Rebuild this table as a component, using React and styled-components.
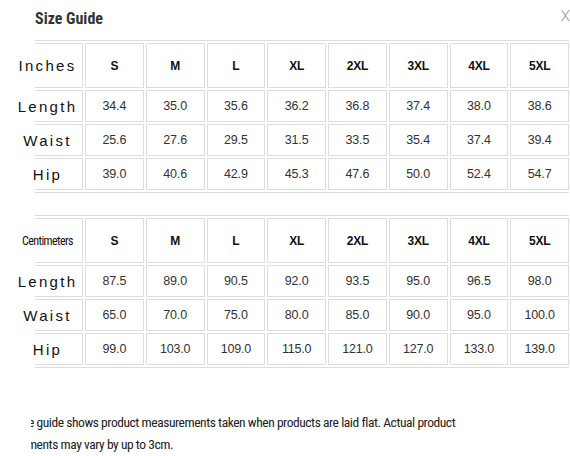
import React from "react";
import styled, { createGlobalStyle } from "styled-components";

const sizes = ["S", "M", "L", "XL", "2XL", "3XL", "4XL", "5XL"];

const inches = [
  { label: "Length", values: ["34.4", "35.0", "35.6", "36.2", "36.8", "37.4", "38.0", "38.6"] },
  { label: "Waist", values: ["25.6", "27.6", "29.5", "31.5", "33.5", "35.4", "37.4", "39.4"] },
  { label: "Hip", values: ["39.0", "40.6", "42.9", "45.3", "47.6", "50.0", "52.4", "54.7"] },
];

const centimeters = [
  { label: "Length", values: ["87.5", "89.0", "90.5", "92.0", "93.5", "95.0", "96.5", "98.0"] },
  { label: "Waist", values: ["65.0", "70.0", "75.0", "80.0", "85.0", "90.0", "95.0", "100.0"] },
  { label: "Hip", values: ["99.0", "103.0", "109.0", "115.0", "121.0", "127.0", "133.0", "139.0"] },
];

// the note is a cropped picture in the original: each line starts a bit left of the clip
const noteLines = [
  { text: "The size guide shows product measurements taken when products are laid flat. Actual product", shift: 38 },
  { text: "measurements may vary by up to 3cm.", shift: 47 },
];

function SizeTable({ unit, narrow, rows }) {
  return (
    <Grid>
      <LabelCell>
        <Label $narrow={narrow}>{unit}</Label>
      </LabelCell>
      {sizes.map((s) => (
        <Cell key={s} $head>
          {s}
        </Cell>
      ))}
      {rows.map((row) => (
        <React.Fragment key={row.label}>
          <LabelCell>
            <Label>{row.label}</Label>
          </LabelCell>
          {row.values.map((v, i) => (
            <Cell key={i}>{v}</Cell>
          ))}
        </React.Fragment>
      ))}
    </Grid>
  );
}

export default function App() {
  return (
    <Modal>
      <GlobalStyle />
      <Header>
        <Title>Size Guide</Title>
        <Close>X</Close>
      </Header>
      <SizeTable unit="Inches" rows={inches} />
      <Spacer />
      <SizeTable unit="Centimeters" narrow rows={centimeters} />
      <NoteClip>
        {noteLines.map((l) => (
          <NoteLine key={l.shift} $shift={l.shift}>
            {l.text}
          </NoteLine>
        ))}
      </NoteClip>
    </Modal>
  );
}

const GlobalStyle = createGlobalStyle`
  html, body {
    margin: 0;
    padding: 0;
    background: #fff;
  }
`;

const condensed = `
  font-family: Roboto, "Liberation Sans", sans-serif;
  font-stretch: 75%;
`;

const Modal = styled.div`
  width: 570px;
  height: 456px;
  overflow: hidden;
  background: #fff;
  font-family: "Liberation Sans", Arial, sans-serif;
`;

const Header = styled.div`
  display: flex;
  justify-content: space-between;
  align-items: center;
  height: 40px;
  padding-left: 35px;
  box-sizing: border-box;
`;

const Title = styled.div`
  ${condensed}
  font-weight: bold;
  font-size: 16px;
  color: #333;
  margin-top: -4px;
`;

const Close = styled.div`
  font-family: Roboto, "Liberation Sans", sans-serif;
  font-weight: 300;
  font-size: 15px;
  color: #999;
  margin-top: -8px;
`;

const Grid = styled.div`
  display: grid;
  grid-template-columns: 48px repeat(8, 1fr);
  grid-template-rows: 45px 32px 32px 32px;
  gap: 2px;
  width: 534px;
  margin-left: 35px;
  padding: 2px 0;
  border-top: 1px solid #ddd;
  border-bottom: 1px solid #ddd;
`;

const Cell = styled.div`
  display: flex;
  align-items: center;
  justify-content: center;
  border: 1px solid #ddd;
  font-family: "Liberation Sans", Arial, sans-serif;
  font-size: ${(p) => (p.$head ? "12px" : "12.5px")};
  font-weight: ${(p) => (p.$head ? "bold" : "normal")};
  letter-spacing: ${(p) => (p.$head ? "-0.3px" : "-0.2px")};
  color: ${(p) => (p.$head ? "#111" : "#333")};
`;

const LabelCell = styled.div`
  display: flex;
  align-items: center;
  justify-content: center;
  border: 1px solid #ddd;
  border-left: none;
  white-space: nowrap;
`;

const Label = styled.span`
  margin-left: -22px;
  font-family: ${(p) => (p.$narrow ? 'Roboto, "Liberation Sans", sans-serif' : '"Liberation Sans", Arial, sans-serif')};
  font-stretch: ${(p) => (p.$narrow ? "75%" : "100%")};
  font-size: ${(p) => (p.$narrow ? "12px" : "15px")};
  letter-spacing: ${(p) => (p.$narrow ? "-0.6px" : "2.3px")};
  color: #111;
`;

const Spacer = styled.div`
  height: 22px;
`;

const NoteClip = styled.div`
  margin: 43px 0 0 31px;
  overflow: hidden;
`;

const NoteLine = styled.div`
  ${condensed}
  margin-left: -${(p) => p.$shift}px;
  white-space: nowrap;
  font-size: 13.5px;
  letter-spacing: -0.44px;
  line-height: 22px;
  color: #222;
`;
